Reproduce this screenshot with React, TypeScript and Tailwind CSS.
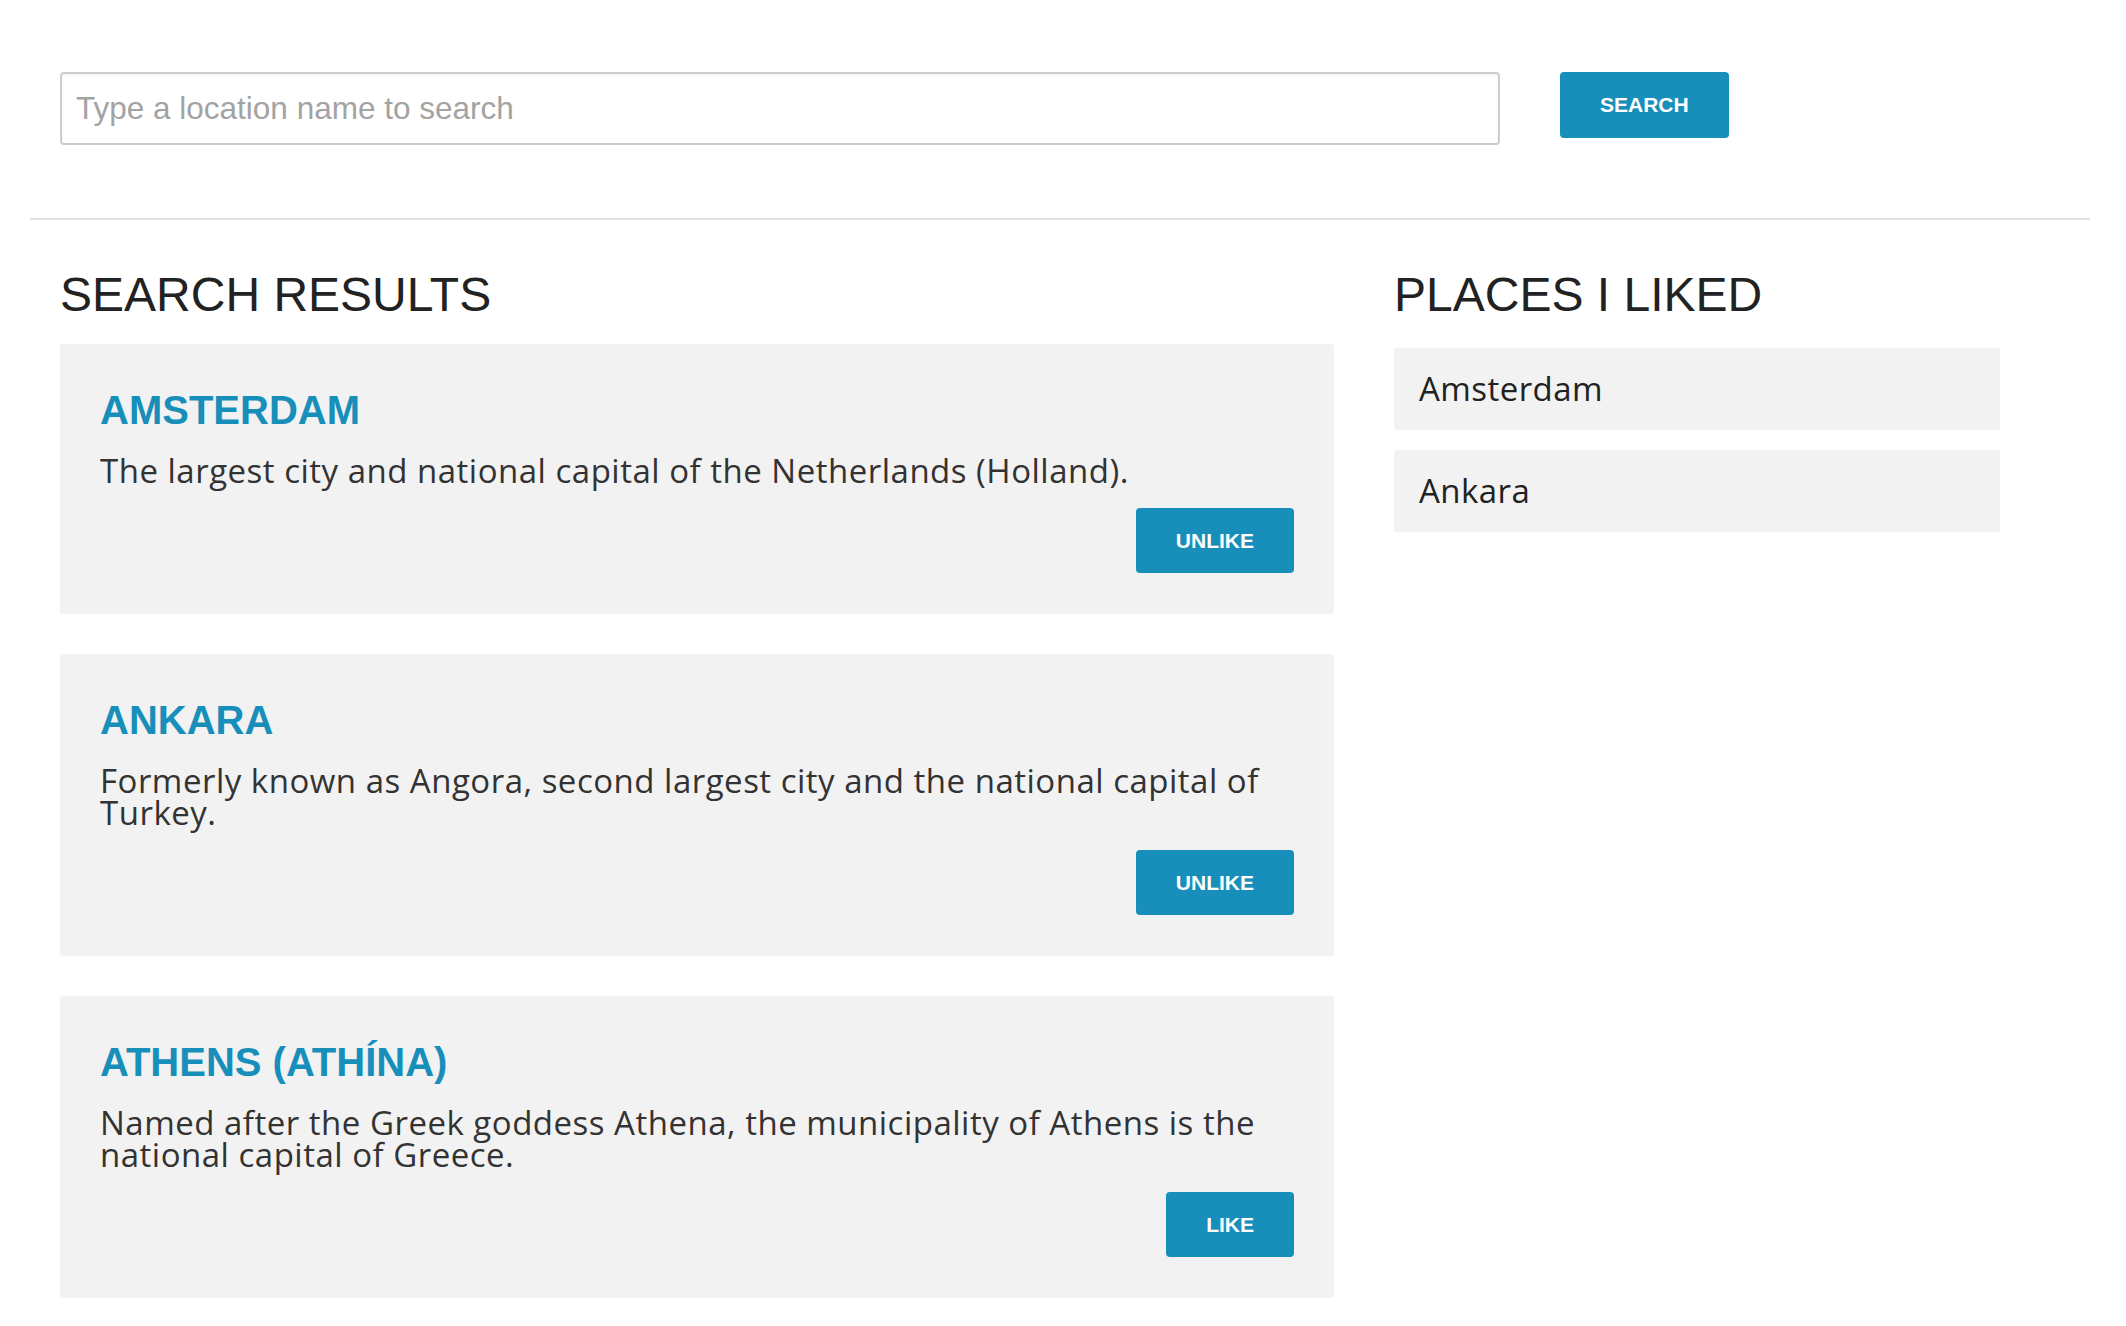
import React from "react";

const results = [
  {
    name: "AMSTERDAM",
    text: "The largest city and national capital of the Netherlands (Holland).",
    liked: true,
  },
  {
    name: "ANKARA",
    text: "Formerly known as Angora, second largest city and the national capital of Turkey.",
    liked: true,
  },
  {
    name: "ATHENS (ATHÍNA)",
    text: "Named after the Greek goddess Athena, the municipality of Athens is the national capital of Greece.",
    liked: false,
  },
];

const liked = ["Amsterdam", "Ankara"];

const App = () => {
  return (
    <div className="min-h-screen bg-white px-[30px] pt-[72px] font-['Liberation_Sans',Arial,sans-serif] text-[#222]">
      <div className="flex items-start gap-[60px] px-[30px]">
        <input
          type="text"
          placeholder="Type a location name to search"
          className="h-[73px] w-[1440px] rounded-[4px] border-2 border-[#cccccc] px-[14px] text-[31.5px] text-[#333] shadow-[inset_0_1px_2px_rgba(0,0,0,0.08)] outline-none placeholder:text-[#a3a3a3]"
        />
        <button className="h-[66px] rounded-[4px] bg-[#178fba] px-[40px] text-[21px] font-bold text-white">
          SEARCH
        </button>
      </div>

      <hr className="mt-[73px] mr-[6px] border-t-2 border-[#e0e0e0]" />

      <div className="flex items-start gap-[60px] px-[30px] pt-[49px]">
        <div className="w-[1274px]">
          <h2 className="text-[48px] leading-[52px] text-[#222]">SEARCH RESULTS</h2>
          <div className="mt-[23px] flex flex-col gap-[40px]">
            {results.map((r) => (
              <div key={r.name} className="flex flex-col rounded-[3px] bg-[#f2f2f2] px-[40px] pt-[44px] pb-[41px]">
                <h3 className="text-[40px] font-bold leading-[44px] text-[#178fba]">{r.name}</h3>
                <p className="mt-[23px] font-['Open_Sans',sans-serif] text-[33px] leading-[32px] tracking-[0.5px] text-[#333]">{r.text}</p>
                <div className="mt-[21px] flex justify-end">
                  <button className="h-[65px] rounded-[4px] bg-[#178fba] px-[40px] text-[21px] font-bold text-white">
                    {r.liked ? "UNLIKE" : "LIKE"}
                  </button>
                </div>
              </div>
            ))}
          </div>
        </div>

        <div className="w-[606px]">
          <h2 className="text-[48px] leading-[52px] text-[#222]">PLACES I LIKED</h2>
          <div className="mt-[27px] flex flex-col gap-[20px]">
            {liked.map((l) => (
              <div key={l} className="flex h-[82px] items-center rounded-[3px] bg-[#f2f2f2] px-[25px] font-['Open_Sans',sans-serif] text-[33px] tracking-[0.45px] text-[#222]">
                {l}
              </div>
            ))}
          </div>
        </div>
      </div>
    </div>
  );
};

export default App;
